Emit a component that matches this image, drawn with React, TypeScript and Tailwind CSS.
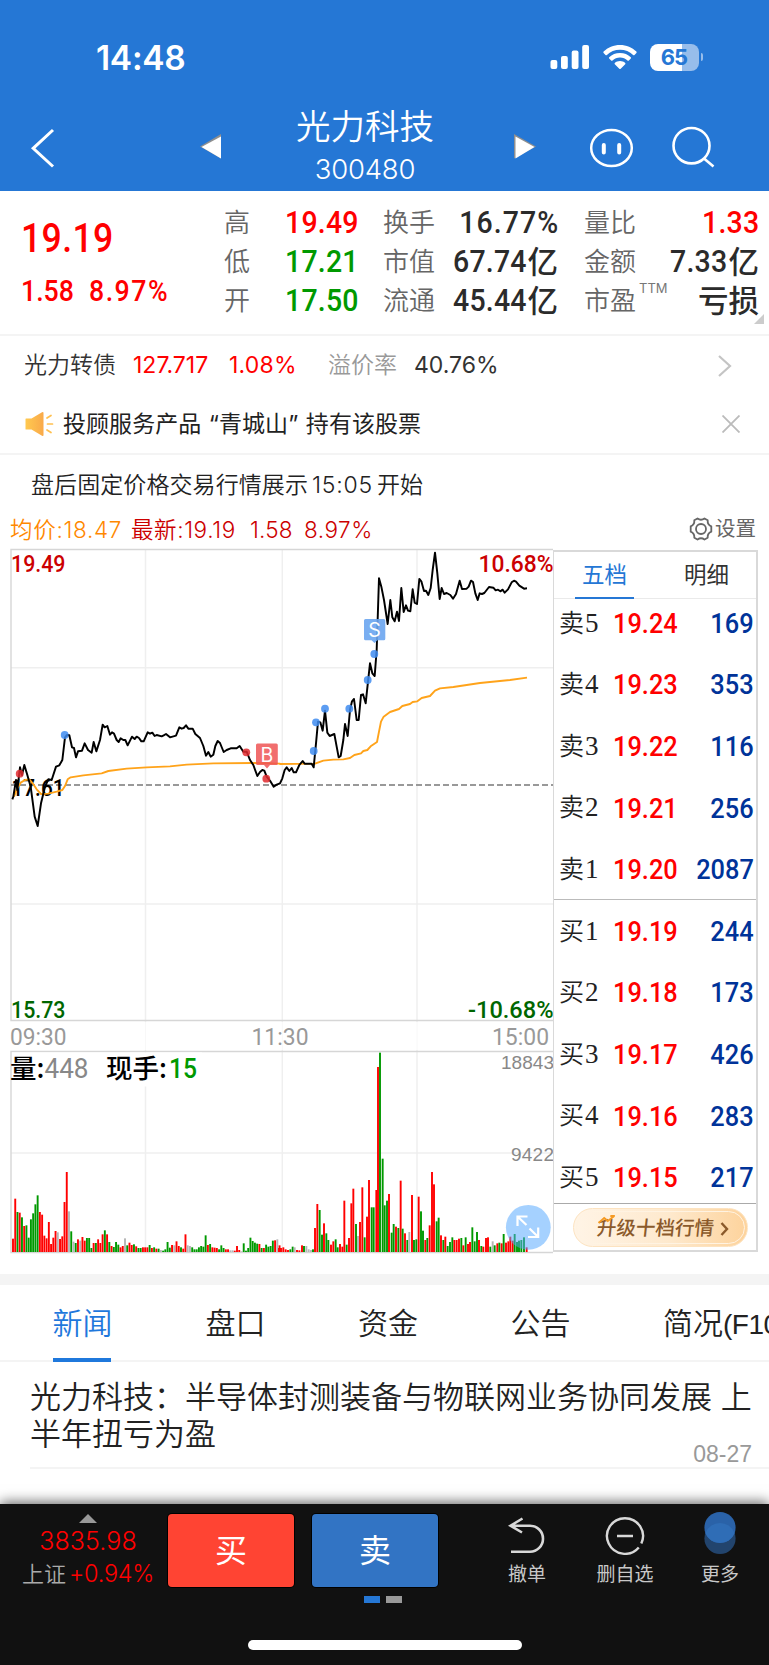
import React from "react";

const SANS = "font-['Inter','Noto_Sans_CJK_SC',sans-serif]";

/* Condensed numerals used for quotes */
function Num({ children, className = "", left = false }: { children: React.ReactNode; className?: string; left?: boolean }) {
  return (
    <span
      className={
        "inline-block whitespace-pre font-['Roboto','Noto_Sans_CJK_SC',sans-serif] font-medium scale-x-[0.89] " +
        (left ? "origin-left " : "origin-right ") +
        className
      }
    >
      {children}
    </span>
  );
}

function StatusBar() {
  return (
    <div className="flex h-[114px] items-center pl-[96px] pr-[66px]">
      <span className="flex-1 pt-[3px] text-[33.500px] font-semibold leading-none tracking-[-0.300px]">14:48</span>
      <svg width="40" height="26" viewBox="0 0 40 26" fill="#fff">
        <rect x="0.5" y="16" width="6.8" height="9" rx="2" />
        <rect x="11" y="12" width="6.8" height="13" rx="2" />
        <rect x="21.7" y="6.5" width="6.8" height="18.5" rx="2" />
        <rect x="32.2" y="1" width="6.8" height="24" rx="2" />
      </svg>
      <svg className="ml-[13px]" width="34" height="26" viewBox="0 0 34 26" fill="#fff">
        <path d="M17 1C10.600 1 4.800 3.500.6 7.600c-.4.4-.4 1 0 1.400l1.900 1.900c.4.4 1 .4 1.400 0C7.300 7.600 11.900 5.700 17 5.700s9.700 1.900 13.100 5.200c.4.4 1 .4 1.400 0L33.400 9c.4-.4.4-1 0-1.400C29.200 3.500 23.400 1 17 1z" />
        <path d="M17 9c-4.200 0-8 1.600-10.800 4.200-.4.4-.4 1 0 1.400l1.900 1.900c.4.4 1 .4 1.400 0 2-1.800 4.600-2.900 7.500-2.900s5.500 1.100 7.500 2.900c.4.4 1 .4 1.400 0l1.900-1.900c.4-.4.4-1 0-1.400C25 10.600 21.200 9 17 9z" />
        <path d="M17 17c-2 0-3.800.7-5.200 1.900-.4.4-.4 1 0 1.400l4.500 4.400c.4.4 1 .4 1.400 0l4.500-4.400c.4-.4.4-1 0-1.400C20.800 17.700 19 17 17 17z" />
      </svg>
      <div className="ml-[13px] flex h-[27px] w-[49px] items-center justify-center rounded-[8px] bg-[linear-gradient(90deg,#fff_66%,#97bdeb_66%)] text-[22px] font-bold tracking-[-0.800px] text-[#2577d5]">
        65
      </div>
      <span className="ml-[2px] h-[8px] w-[2.500px] rounded-r-full bg-[#97bdeb]" />
    </div>
  );
}

function TitleBar() {
  return (
    <div className="flex h-[77px] items-start">
      <svg className="ml-[30px] mt-[14px]" width="28" height="41" viewBox="0 0 28 41" fill="none" stroke="#fff" strokeWidth="3">
        <path d="M23 2L3.200 20.300L23 38.500" />
      </svg>
      <svg className="ml-[141px] mt-[20px]" width="23" height="26" viewBox="0 0 23 26">
        <path d="M1 12.500L22 0V24.500z" fill="#8f8f8f" />
        <path d="M2.500 13L22 2.500V24.500z" fill="#fff" />
      </svg>
      <div className="w-[286px] text-center">
        <div className="mt-[-8px] text-[34.500px] font-[350] leading-[42px]">光力科技</div>
        <div className="mt-[4px] text-[27.500px] font-[350] leading-[34px] tracking-[-0.200px]">300480</div>
      </div>
      <svg className="ml-[6px] mt-[20px]" width="23" height="26" viewBox="0 0 23 26">
        <path d="M22 12.500L0 0V24.500z" fill="#8f8f8f" />
        <path d="M20.500 13L1.500 2.500V24.500z" fill="#fff" />
      </svg>
      <svg className="ml-[52px] mt-[13px]" width="46" height="42" viewBox="0 0 46 42" fill="none" stroke="#fff" strokeWidth="2.500">
        <ellipse cx="22.500" cy="21" rx="20.300" ry="18" />
        <path d="M14.800 18V25.500M30.200 18V25.500" strokeWidth="4" strokeLinecap="round" />
      </svg>
      <svg className="ml-[36px] mt-[11px]" width="46" height="44" viewBox="0 0 46 44" fill="none" stroke="#fff" strokeWidth="2.600">
        <ellipse cx="20.500" cy="20.700" rx="18" ry="17.700" />
        <path d="M33 33.500L42.500 41.500" />
      </svg>
    </div>
  );
}

type Cell = { label: React.ReactNode; num?: string; cjk?: string; color: string };

function StatCol({ cells, className }: { cells: Cell[]; className: string }) {
  return (
    <div className={className}>
      {cells.map((c, i) => (
        <div key={i} className="flex h-[39px] items-center justify-between">
          <span className="flex whitespace-nowrap text-[26px] font-[350] text-[#666]">{c.label}</span>
          <span className={"flex items-center text-[32px] leading-[39px] " + c.color}>
            {c.num && <Num className={c.num.endsWith("%") ? "-mr-[1px] tracking-[1.200px]" : "tracking-[0.200px]"}>{c.num}</Num>}
            {c.cjk && <span className="ml-px text-[30.500px] font-medium">{c.cjk}</span>}
          </span>
        </div>
      ))}
    </div>
  );
}

function Quote() {
  return (
    <section className="relative flex h-[145px] border-b-2 border-[#f4f4f4] pt-[12px]">
      <div className="w-[224px] pl-[21px] text-[#f00]">
        <Num left className="mt-[12px] block text-[40px] leading-[48px] tracking-[0.400px]">19.19</Num>
        <div className="mt-[8px] flex text-[30px] leading-[40px]">
          <Num left>1.58</Num>
          <Num left className="ml-[8px] tracking-[1.700px]">8.97%</Num>
        </div>
      </div>
      <StatCol
        className="w-[135px]"
        cells={[
          { label: "高", num: "19.49", color: "text-[#f00]" },
          { label: "低", num: "17.21", color: "text-[#090]" },
          { label: "开", num: "17.50", color: "text-[#090]" },
        ]}
      />
      <StatCol
        className="ml-[24px] w-[175px]"
        cells={[
          { label: "换手", num: "16.77%", color: "text-[#2b2b2b]" },
          { label: "市值", num: "67.74", cjk: "亿", color: "text-[#2b2b2b]" },
          { label: "流通", num: "45.44", cjk: "亿", color: "text-[#2b2b2b]" },
        ]}
      />
      <StatCol
        className="ml-[26px] w-[175px]"
        cells={[
          { label: "量比", num: "1.33", color: "text-[#f00]" },
          { label: "金额", num: "7.33", cjk: "亿", color: "text-[#2b2b2b]" },
          {
            label: (
              <>
                市盈<span className="ml-[3px] text-[13px] font-normal leading-[14px] text-[#777]">TTM</span>
              </>
            ),
            cjk: "亏损",
            color: "text-[#2b2b2b]",
          },
        ]}
      />
      <svg className="absolute right-[5px] top-[123px]" width="10" height="10">
        <path d="M10 0V10H0z" fill="#ccc" />
      </svg>
    </section>
  );
}

function BondRow() {
  return (
    <div className="flex h-[59px] items-center pl-[24px] text-[23px] text-[#333]">
      <span className="w-[109px] font-[350]">光力转债</span>
      <span className="w-[96px] text-[#f00]">127.717</span>
      <span className="w-[99px] tracking-[0.200px] text-[#f00]">1.08%</span>
      <span className="w-[86px] font-[350] text-[#999]">溢价率</span>
      <span className="flex-1">40.76%</span>
      <svg className="mr-[36px]" width="16" height="24" viewBox="0 0 16 24" fill="none" stroke="#c4c4c4" strokeWidth="2.200">
        <path d="M2 2L13 12L2 22" />
      </svg>
    </div>
  );
}

function AdvisorRow() {
  return (
    <div className="flex h-[60px] items-center border-b-2 border-[#f4f4f4] pl-[25px] text-[23px] text-[#222]">
      <svg width="30" height="26" viewBox="0 0 30 26">
        <defs>
          <linearGradient id="horn" x1="0" x2="1">
            <stop offset="0" stopColor="#ffc94f" />
            <stop offset="1" stopColor="#f9a94a" />
          </linearGradient>
        </defs>
        <path d="M1 7.500H6.500L17 1.300Q18.500.5 18.500 2V24Q18.500 25.500 17 24.700L6.500 18.500H1Q.5 18.500.5 18V8Q.5 7.500 1 7.500z" fill="url(#horn)" />
        <path d="M22 7L26 4.500M22.500 13H27.500M22 19L26 21.500" stroke="#ffc04f" strokeWidth="1.700" strokeLinecap="round" />
      </svg>
      <span className="ml-[8px] flex-1 whitespace-pre tracking-[0.050px] [word-spacing:1px]">投顾服务产品 “青城山” 持有该股票</span>
      <svg className="mr-[29px]" width="18" height="18" viewBox="0 0 18 18" stroke="#bbb" strokeWidth="1.800">
        <path d="M0.500 0.500L17.500 17.500M17.500 0.500L0.500 17.500" />
      </svg>
    </div>
  );
}

function Legend() {
  return (
    <div className="flex h-[38px] items-center pl-[10px] pr-[13px] text-[22.500px]">
      <span className="w-[121px] font-[350] tracking-[0.700px] text-[#f80]">均价:18.47</span>
      <span className="w-[119px] font-[350] tracking-[0.600px] text-[#c00]">最新:19.19</span>
      <span className="w-[54px] font-[350] tracking-[0.200px] text-[#c00]">1.58</span>
      <span className="flex-1 font-[350] tracking-[0.500px] text-[#c00]">8.97%</span>
      <svg className="mb-[2px]" width="24" height="24" viewBox="0 0 24 24" fill="none" stroke="#666" strokeWidth="1.800" strokeLinejoin="round">
        <path d="M8.500 1.500Q12 4 15.500 1.500L18.700 3.300Q18.300 7.600 22.300 9.300V14.700Q18.300 16.400 18.700 20.700L15.500 22.500Q12 20 8.500 22.500L5.300 20.700Q5.700 16.400 1.700 14.700V9.300Q5.700 7.600 5.300 3.300z" />
        <circle cx="12" cy="12" r="5" />
      </svg>
      <span className="mb-[2px] ml-[2px] text-[20.500px] text-[#666]">设置</span>
    </div>
  );
}

/* Chart series, in third-of-pixel units relative to each half's origin */
const PRICE_AM =
  "37,478 40,470 48,420 52,450 60,382 66,405 73,375 82,405 92,440 104,530 113,558 123,490 135,440 145,418 155,420 168,380 178,376 187,360 195,292 201,285 208,286 216,322 222,324 228,352 234,334 246,332 254,310 264,330 275,338 281,306 289,334 300,300 308,254 314,262 322,258 330,284 336,277 342,281 350,300 356,306 362,295 370,300 376,300 383,316 396,290 404,297 410,290 417,294 424,304 431,304 443,277 450,281 457,278 464,288 470,285 485,289 491,286 498,282 510,292 528,287 538,262 545,266 551,264 558,256 565,266 578,266 586,282 600,294 610,318 618,347 625,336 632,350 640,344 646,318 653,303 660,309 671,336 680,330 692,325 710,325 719,318 730,335 740,335 750,360 760,375 772,408 780,396 787,390 793,392 800,410 812,425 821,440 830,434 840,430";
const PRICE_PM =
  "0,730 7,715 14,690 20,682 28,693 35,684 41,697 48,697 58,675 68,663 74,671 95,671 101,682 108,610 114,545 121,547 128,572 135,512 142,578 149,588 163,582 170,620 176,652 182,648 190,600 195,552 203,588 210,510 216,484 222,477 230,540 236,540 243,465 249,463 257,490 264,425 270,370 277,400 284,408 290,330 297,115 304,140 312,180 323,252 331,180 337,232 344,244 351,215 357,243 364,144 371,216 378,196 384,212 391,214 398,148 404,188 411,192 418,117 424,124 432,153 438,152 445,165 452,144 458,90 465,38 472,100 479,177 485,144 492,162 500,159 511,165 519,176 528,162 539,122 546,147 560,146 566,140 573,122 579,126 586,160 593,180 599,160 606,162 613,159 627,141 640,143 647,151 654,149 661,154 668,149 674,158 684,148 695,127 702,122 708,125 718,137 732,146 741,145";
const AVG_AM =
  "42,470 50,448 62,428 75,420 88,418 98,430 110,448 123,462 145,461 170,455 187,450 195,438 203,418 212,412 250,406 305,400 325,393 380,386 440,382 510,379 560,374 640,370 760,369 840,371";
const AVG_PM =
  "0,672 105,671 130,662 160,659 190,658 210,654 223,645 243,640 250,633 262,630 272,619 291,606 297,575 303,545 311,530 330,516 357,507 367,498 390,492 398,486 412,484 425,474 450,468 465,452 480,445 520,441 600,429 690,420 741,413";

const toPts = (s: string, ox: number, oy: number) =>
  s
    .split(" ")
    .map((p) => {
      const [x, y] = p.split(",").map(Number);
      return `${(ox + x / 3).toFixed(2)},${(oy + y / 3).toFixed(2)}`;
    })
    .join(" ");

const PRICE = toPts(PRICE_AM, 0, 640) + " " + toPts(PRICE_PM, 280, 540);
const AVG = toPts(AVG_AM, 0, 640) + " " + toPts(AVG_PM, 280, 540);

const VOL_AM =
  "r40 r160 g120 r118 g104 r78 g80 g43 g98 g116 g143 g170 r120 r112 r49 r41 r90 r24 r43 r63 x59 r39 r47 r150 r240 x122 g62 x31 g27 r38 x34 r45 r34 g42 g42 g12 r27 g27 r38 r27 r53 g65 r53 g30 r18 g15 g30 g22 r14 r18 x41 g20 r28 r21 g23 r17 g12 g12 r14 r14 r14 g21 r12 g14 r10 g10 x6 g4 g8 g30 g13 r21 x20 r32 r18 g14 r10 r53 x20 x18 g14 g8 g8 g14 g18 g16 g50 r21 g24 r14 r13 r12 g8 g20 g12 r8 r8 x5 x5 r4 r18 r6 x2 g26 g4 g12 g43 g33 g28 g25 r24 g12 r12 g22 g16 g18 g34 r35 x38 r20";
const VOL_PM =
  "-3r12 3r12 10r14 17r8 24r6 31g8 38g16 44x14 51r6 58r5 66r20 72g18 79x18 86x8 93x6 99g8 105r72 112r144 119g126 126g52 132r86 139g56 145g36 153r22 160r32 167g38 173g14 180r24 187r16 193r154 200g22 207r42 214r146 220r190 228g84 234x48 240r90 247r194 254g44 261r106 267r216 275g134 281g134 289r186 294r555 300g598 308g280 314g140 321g154 327r174 335g58 341g84 348r76 355g72 362r214 368g70 375r56 382g36 388x60 396r171 402g36 409g38 416r166 423g122 429g64 436r36 442g42 449r80 456r240 462r203 470g92 476g103 483r50 490g36 496r46 503g18 510g30 517g44 523r36 530r36 537r40 544g42 550r20 557g44 564r24 570r30 577g74 584g32 591g60 597r36 604g18 610r16 618r42 624r44 631g16 638x32 644g20 652r26 658g28 665r26 671g54 678r28 685r32 691r46 698r34 704g54 711g30 717g34 724g36 732g44 740r14";

const FILL: Record<string, string> = { r: "#ff0000", g: "#009900", x: "#b5b5b5" };
const BARS = [
  ...VOL_AM.split(" ").map((b, i) => ({ x: 13 + i * 2.24, h: Number(b.slice(1)) / 3, c: FILL[b[0]] })),
  ...VOL_PM.split(" ").map((b) => {
    const m = b.match(/^(-?\d+)([rgx])(\d+)$/)!;
    return { x: 280 + Number(m[1]) / 3, h: Number(m[3]) / 3, c: FILL[m[2]] };
  }),
];

const BLUE_DOTS = [[64.7, 735], [313.7, 751], [316, 722.3], [325, 708.7], [349.3, 708.7], [367.7, 680], [374.3, 654]];
const RED_DOTS = [[19.7, 773.7], [246.3, 752.3], [266.3, 778.7]];

function Chart() {
  const num = { fontFamily: "Roboto, sans-serif", fontWeight: 500, fontSize: 24, lengthAdjust: "spacingAndGlyphs" as const };
  return (
    <svg className="shrink-0 overflow-visible" width="554" height="705" viewBox="0 549 554 705">
      <g fill="none" stroke="#efefef" strokeWidth="1.500">
        <path d="M145.500 550V1252M282.300 550V1252M417 550V1252M11 667.700H553M11 904H553M11 1153H553" />
      </g>
      <rect x="10" y="1022" width="543" height="28" fill="#fff" />
      <path d="M145.500 1022V1050M282.300 1022V1050M417 1022V1050" stroke="#f8f8f8" />
      <g fill="none" stroke="#d6d6d6" strokeWidth="1.400">
        <path d="M553 549.500H11V1020.500H553M553 1051.500H11V1252.500H553" />
      </g>
      <path d="M11 785H553" stroke="#999" strokeWidth="1.900" strokeDasharray="6 3" />
      <rect x="12" y="1052.500" width="190" height="34" fill="#fff" />

      <text x="11.500" y="795.500" textLength="53" fill="#000" {...num}>17.61</text>
      <polyline points={AVG} fill="none" stroke="#ffa31a" strokeWidth="1.900" strokeLinejoin="round" />
      <polyline points={PRICE} fill="none" stroke="#000" strokeWidth="1.950" strokeLinejoin="round" />
      {RED_DOTS.map(([x, y]) => (
        <circle key={x} cx={x} cy={y} r="3.900" fill="#e02a2f" fillOpacity="0.850" />
      ))}
      {BLUE_DOTS.map(([x, y]) => (
        <circle key={x} cx={x} cy={y} r="3.900" fill="#3f8cf0" fillOpacity="0.850" />
      ))}
      <g fontFamily="Inter, sans-serif" fontSize="19.500" textAnchor="middle">
        <path d="M257.500 743.500H276.300a1.500 1.500 0 0 1 1.500 1.500V763.500a1.500 1.500 0 0 1-1.500 1.500H270L267 768.500L264 765H257.500a1.500 1.500 0 0 1-1.500-1.500V745a1.500 1.500 0 0 1 1.500-1.500z" fill="#ee5555" fillOpacity="0.850" />
        <text x="267" y="761.500" fill="#fff">B</text>
        <path d="M365.500 619H383.800a1.500 1.500 0 0 1 1.500 1.500V638.800a1.500 1.500 0 0 1-1.500 1.500H377.500L374.500 643L371.500 640.300H365.500a1.500 1.500 0 0 1-1.500-1.500V620.500a1.500 1.500 0 0 1 1.500-1.500z" fill="#6aa5f0" fillOpacity="0.900" />
        <text x="374.600" y="637" fill="#fff">S</text>
      </g>

      <text x="11" y="572.300" textLength="54.500" fill="#c00" {...num}>19.49</text>
      <text x="478.500" y="572.300" textLength="75" fill="#c00" {...num}>10.68%</text>
      <text x="11" y="1018.300" textLength="54.500" fill="#060" {...num}>15.73</text>
      <text x="468" y="1018.300" textLength="85.500" fill="#060" {...num}>-10.68%</text>
      <g fill="#999">
        <text x="10" y="1045" textLength="56.500" {...num} fontWeight={400}>09:30</text>
        <text x="251.500" y="1045" textLength="57" {...num} fontWeight={400}>11:30</text>
        <text x="492" y="1045" textLength="57" {...num} fontWeight={400}>15:00</text>
      </g>
      <g fontFamily="'Noto Sans CJK SC', sans-serif" fontSize="26.500" fontWeight="500">
        <text x="10" y="1078">量:</text>
        <text x="106" y="1078">现手:</text>
      </g>
      <text x="44.500" y="1078" textLength="44" fill="#888" {...num} fontSize={27} fontWeight={400}>448</text>
      <text x="169" y="1078" textLength="28" fill="#090" {...num} fontSize={27}>15</text>
      <g fontFamily="'Liberation Sans', sans-serif" fontSize="19" fill="#888">
        <text x="501" y="1069.300" textLength="53">18843</text>
        <text x="511" y="1161" textLength="43">9422</text>
      </g>

      {BARS.map((b, i) => (
        <rect key={i} x={b.x - 0.95} y={1252 - b.h} width="1.900" height={b.h} fill={b.c} />
      ))}

      <circle cx="528.300" cy="1227.300" r="22.400" fill="#52a7ff" fillOpacity="0.520" />
      <path d="M527.500 1216.500H517.500V1226M517.500 1216.500L526.500 1225M538.200 1227.500V1237H528M538.200 1237L529.500 1228.500" fill="none" stroke="#fff" strokeWidth="2.200" />
    </svg>
  );
}

const ASKS = [["卖", "5", "19.24", "169"], ["卖", "4", "19.23", "353"], ["卖", "3", "19.22", "116"], ["卖", "2", "19.21", "256"], ["卖", "1", "19.20", "2087"]];
const BIDS = [["买", "1", "19.19", "244"], ["买", "2", "19.18", "173"], ["买", "3", "19.17", "426"], ["买", "4", "19.16", "283"], ["买", "5", "19.15", "217"]];

function Level({ row }: { row: string[] }) {
  return (
    <div className="flex h-[61.550px] items-center pl-[5px] pr-[2px]">
      <span className="mb-[2px] flex w-[53.500px] items-baseline text-[25px] font-[350] leading-[30px] text-[#222]">
        {row[0]}
        <span className="ml-px font-['Liberation_Serif',serif] text-[27px] font-normal">{row[1]}</span>
      </span>
      <Num left className="mt-px text-[28.500px] text-[#f00]">{row[2]}</Num>
      <span className="mt-px flex-1 text-right">
        <Num className="text-[28.500px] text-[#039]">{row[3]}</Num>
      </span>
    </div>
  );
}

function OrderBook() {
  return (
    <div className="-ml-px mt-px flex h-[702px] w-[205px] flex-col border-2 border-l-[1.500px] border-[#d9d9d9]">
      <div className="flex h-[47px] shrink-0 justify-between border-b border-[#eaeaea] pl-[21px] pr-[27px] text-[22.500px] leading-[45px]">
        <span className="h-[47px] w-[59px] border-b-2 border-[#2577d5] text-center text-[#2577d5]">五档</span>
        <span className="text-[#333]">明细</span>
      </div>
      <div className="-mt-[6px] h-[307px] shrink-0 border-b-[1.500px] border-[#bbb] bg-transparent">
        {ASKS.map((r) => <Level key={r[1]} row={r} />)}
      </div>
      <div className="h-[304px] shrink-0 border-b-[1.500px] border-[#aaa] pt-[1px]">
        {BIDS.map((r) => <Level key={r[1]} row={r} />)}
      </div>
      <div className="flex flex-1 items-center pl-[19px]">
        <div className="flex h-[39px] w-[175px] items-center rounded-full border-[1.500px] border-[#fde3c0] bg-[linear-gradient(90deg,#fff4e6,#fee9cd_55%,#fdd39c)] p-[2px]">
          <div className="flex h-full w-full items-center justify-center rounded-full border border-[#fff3e2] pl-[5px] pt-[3px] text-[19.500px] font-medium text-[#8b5a2b]">
            <span className="relative inline-block -skew-x-6">
              升级十档行情
              <svg className="absolute left-[0px] top-[1px]" width="18" height="9" viewBox="0 0 18 9" fill="none" stroke="#f59a23" strokeWidth="2">
                <path d="M1 8L6 3L10 6L16 1M12 1H16.500" />
              </svg>
            </span>
            <svg className="ml-[6px]" width="9" height="14" viewBox="0 0 9 14" fill="none" stroke="#8b5a2b" strokeWidth="2.400">
              <path d="M1.500 1L7 7L1.500 13" />
            </svg>
          </div>
        </div>
      </div>
    </div>
  );
}

function Tabs() {
  return (
    <nav className="flex h-[77px] whitespace-nowrap border-b-2 border-[#f4f4f4] pl-[52.500px] text-[30px] font-[350] leading-[77px] text-[#222]">
      <span className="relative h-[77px] w-[153px] shrink-0 text-[#1f78dc]">
        新闻
        <span className="absolute bottom-0 left-0 h-[4px] w-[58.500px] bg-[#1f78dc]" />
      </span>
      <span className="w-[152.500px] shrink-0">盘口</span>
      <span className="w-[152.500px] shrink-0">资金</span>
      <span className="w-[152.500px] shrink-0">公告</span>
      <span className="shrink-0">
        简况<span className="font-['Liberation_Sans',sans-serif] text-[28px] font-normal tracking-[-0.500px]">(F10)</span>
      </span>
    </nav>
  );
}

function BottomItem({ label, className, children }: { label: string; className: string; children: React.ReactNode }) {
  return (
    <div className={"flex flex-col items-center text-[19px] text-[#c8c8c8] " + className}>
      {children}
      <span className="mt-[8px] leading-[24px]">{label}</span>
    </div>
  );
}

function BottomBar() {
  return (
    <footer className="relative h-[162px] bg-[#111] shadow-[0_-2px_12px_rgba(0,0,0,0.6)]">
      <div className="flex h-[100px] pt-[11px]">
        <div className="flex w-[168px] shrink-0 flex-col items-center pl-[8px] text-[#f00]">
          <svg className="-mt-px" width="18" height="9"><path d="M9 0L18 9H0z" fill="#999" /></svg>
          <span className="mt-[2px] text-[25px] font-[350] leading-[33px] tracking-[0.100px]">3835.98</span>
          <span className="-mt-px flex items-center text-[23.500px] font-[350] leading-[34px] tracking-[-0.300px]">
            <span className="mr-[3px] text-[22px] tracking-normal text-[#aaa]">上证</span>+0.94%
          </span>
        </div>
        <button className="-mt-px h-[73px] w-[126px] rounded-[4px] bg-[#ff4433] text-[32px] text-white ring-1 ring-black">买</button>
        <button className="-mt-px ml-[18px] h-[73px] w-[126px] rounded-[4px] bg-[#3274c4] text-[32px] text-white ring-1 ring-black">卖</button>
        <BottomItem label="撤单" className="ml-[59px] w-[60px]">
          <svg className="mt-[2px]" width="38" height="38" viewBox="0 0 38 38" fill="none" stroke="#d8d8d8" strokeWidth="2.600">
            <path d="M14.500 1.500L2.500 8.700L14 15.500M2.500 8.700H22A13 13 0 0 1 22 34.700H3" />
          </svg>
        </BottomItem>
        <BottomItem label="删自选" className="ml-[26px] w-[84px]">
          <svg className="mt-[2px]" width="40" height="38" viewBox="0 0 40 38" fill="none" stroke="#d8d8d8" strokeWidth="2.400">
            <path d="M33.790 30.440A18 17.800 0 1 1 36.310 26.520M12 19H28" />
          </svg>
        </BottomItem>
        <BottomItem label="更多" className="ml-[23px] w-[60px]">
          <svg className="mt-[-4px]" width="34" height="44" viewBox="0 0 34 44">
            <circle cx="17" cy="27.500" r="15.600" fill="#22446d" />
            <circle cx="17" cy="16.500" r="15.600" fill="#2a62a8" />
            <path d="M2.400 22A15.600 15.600 0 0 1 31.600 22A15.600 15.600 0 0 1 2.400 22z" fill="#2f6db6" />
          </svg>
        </BottomItem>
      </div>
      <div className="mt-[-8px] flex gap-[6px] pl-[364px]">
        <span className="h-[7px] w-[16px] bg-[#2577d5]" />
        <span className="h-[7px] w-[16px] bg-[#999]" />
      </div>
      <div className="ml-[248px] mt-[37px] h-[10px] w-[274px] rounded-full bg-white" />
    </footer>
  );
}

export default function App() {
  return (
    <div className={"h-[1665px] w-[769px] overflow-hidden bg-white " + SANS}>
      <header className="h-[191px] bg-[#2577d5] text-white">
        <StatusBar />
        <TitleBar />
      </header>
      <Quote />
      <BondRow />
      <AdvisorRow />
      <div className="flex h-[56px] items-center whitespace-pre pl-[31px] pt-[4px] text-[23px] font-[350] tracking-[0.080px] text-[#222]">
        盘后固定价格交易行情展示<span className="mx-[4px] tracking-[0.800px]">15:05</span>开始
      </div>
      <Legend />
      <div className="flex h-[725px]">
        <Chart />
        <OrderBook />
      </div>
      <div className="h-[11px] bg-[#f4f4f4]" />
      <Tabs />
      <article className="ml-[30px] h-[107px] border-b-2 border-[#f4f4f4] pt-[16px]">
        <h2 className="whitespace-pre text-[31px] font-[350] leading-[37px] text-[#222]">
          光力科技：半导体封测装备与物联网业务协同发展 上{"\n"}半年扭亏为盈
        </h2>
        <div className="mt-[-11px] pr-[17px] text-right font-['Liberation_Sans',sans-serif] text-[23px] leading-[26px] text-[#999]">08-27</div>
      </article>
      <div className="h-[35px]" />
      <BottomBar />
    </div>
  );
}
